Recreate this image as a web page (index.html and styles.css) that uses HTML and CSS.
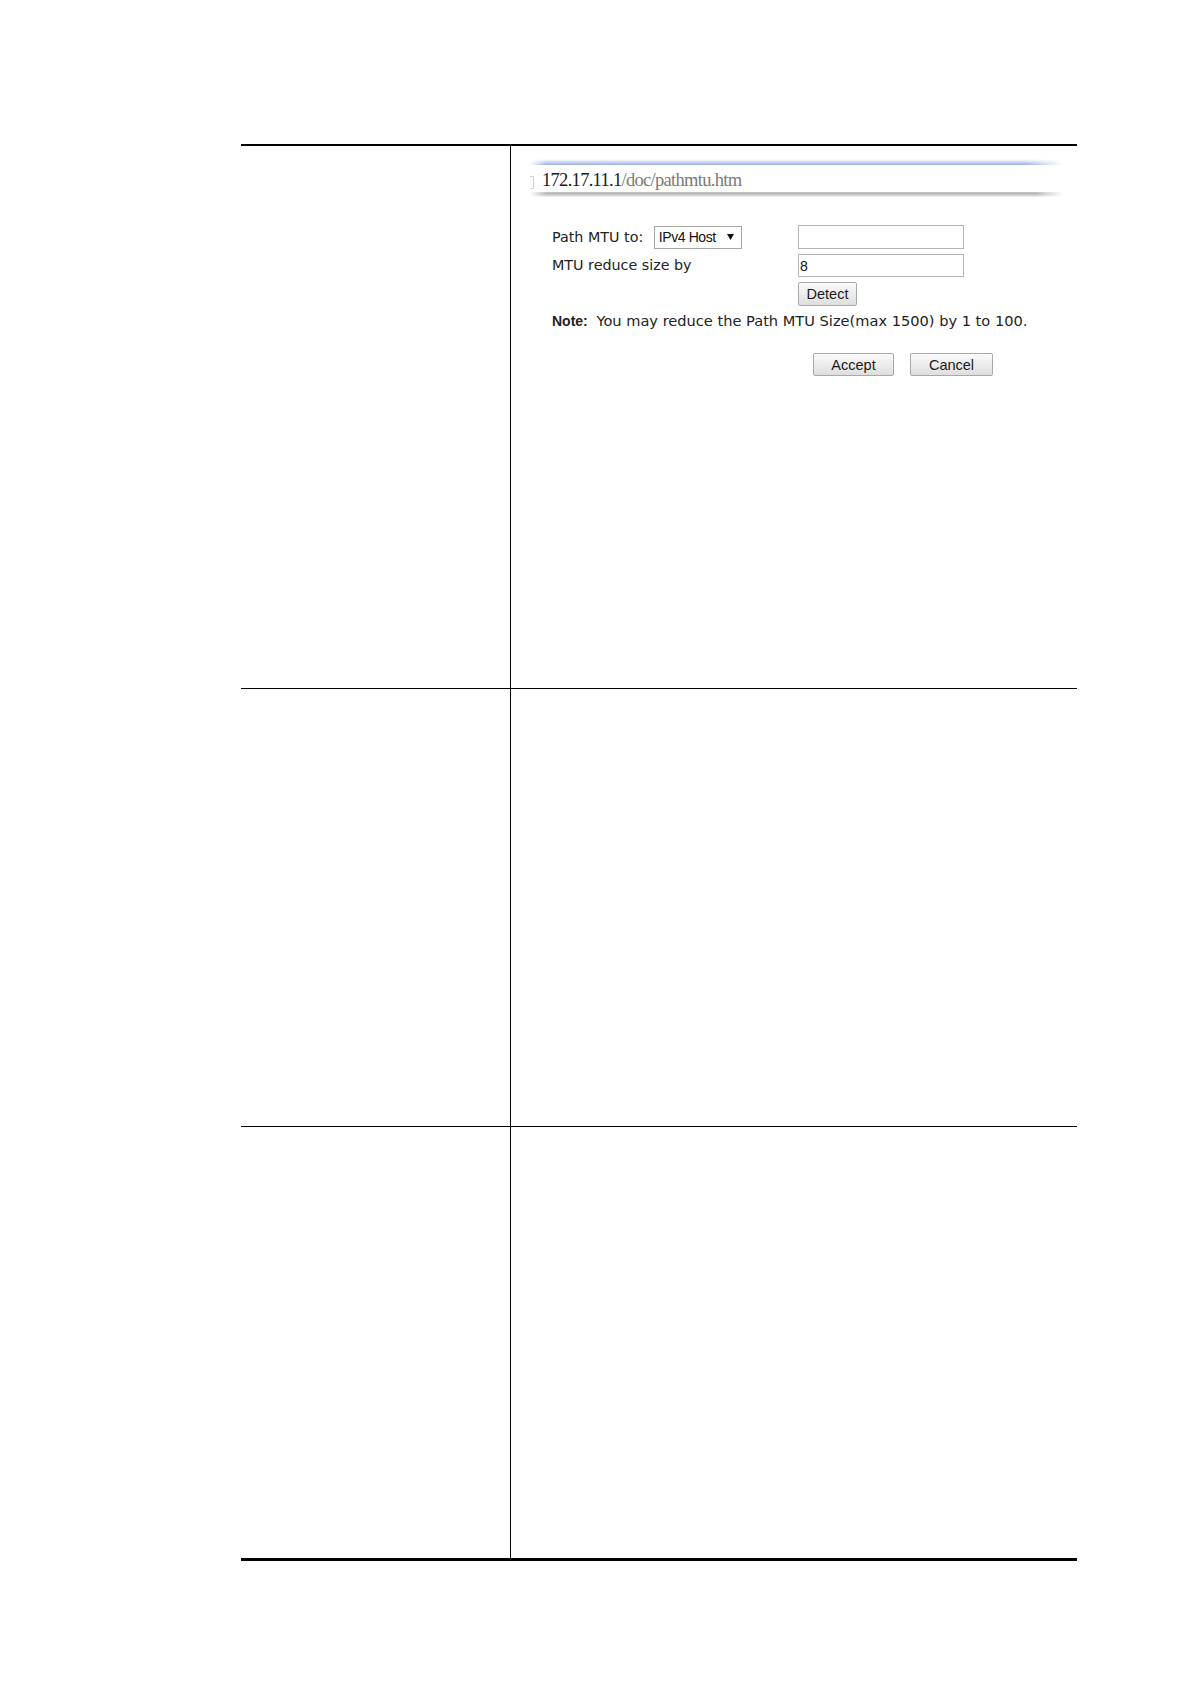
FILE: index.html
```html
<!DOCTYPE html>
<html>
<head>
<meta charset="utf-8">
<link rel="stylesheet" href="styles.css">
</head>
<body>
<div class="doc">
  <div class="row row1">
    <div class="lcell"></div>
    <div class="rcell">
      <div class="shot">
        <div class="addr">
          <div class="addr-top"></div>
          <div class="addr-text"><span class="pageicon"></span><span class="host">172.17.11.1</span><span class="path">/doc/pathmtu.htm</span></div>
          <div class="addr-bottom"></div>
        </div>
        <div class="form">
          <div class="fgrid">
            <div class="label">Path MTU to: <span class="select"><span class="seltext">IPv4 Host</span><svg class="selarrow" width="7" height="6" viewBox="0 0 7 6"><path d="M0 0H7L3.5 6Z" fill="#111"/></svg></span></div>
            <div class="field"><span class="input"></span></div>
            <div class="label">MTU reduce size by</div>
            <div class="field"><span class="input input2">8</span></div>
            <div></div>
            <div class="field"><span class="btn btn-detect">Detect</span></div>
          </div>
          <div class="note"><b class="note-key">Note:</b> You may reduce the Path MTU Size(max 1500) by 1 to 100.</div>
          <div class="actions"><span class="btn btn-wide">Accept</span><span class="btn btn-wide btn-cancel">Cancel</span></div>
        </div>
      </div>
    </div>
  </div>
  <div class="row row2">
    <div class="lcell"></div>
    <div class="rcell"></div>
  </div>
  <div class="row row3">
    <div class="lcell"></div>
    <div class="rcell"></div>
  </div>
</div>
</body>
</html>
```
FILE: styles.css
```css
html, body {
  margin: 0;
  padding: 0;
  background: #fff;
}
body {
  font-family: "DejaVu Sans", Verdana, sans-serif;
  color: #222;
}
.doc {
  margin: 144px 0 0 241px;
  width: 836px;
  border-top: 2px solid #000;
  border-bottom: 3px solid #000;
}
.row {
  display: flex;
}
.row2, .row3 {
  border-top: 1px solid #000;
}
.row1 { height: 542px; }
.row2 { height: 437px; }
.row3 { height: 431px; }
.lcell {
  width: 270px;
  box-sizing: border-box;
  border-right: 1px solid #000;
  flex: none;
}
.rcell {
  flex: 1;
}
.shot {
  padding: 13px 15px 0 19px;
}
.addr {
  width: 533px;
}
.addr-top {
  height: 6px;
  background: linear-gradient(#ffffff, #e6ebf8 30%, #bfcaea 65%, #9eaedc);
  -webkit-mask-image: linear-gradient(to right, transparent 0%, #000 3%, #000 93%, transparent 100%);
  mask-image: linear-gradient(to right, transparent 0%, #000 3%, #000 93%, transparent 100%);
}
.addr-text {
  height: 27px;
  display: flex;
  align-items: flex-end;
  font-family: "Liberation Serif", "Times New Roman", serif;
  font-size: 18.5px;
  line-height: 20px;
  padding-bottom: 2px;
  box-sizing: border-box;
  letter-spacing: -0.7px;
}
.pageicon {
  width: 3px;
  height: 11px;
  border: 1px solid #d4d4d4;
  border-left: none;
  margin-right: 8px;
  margin-bottom: 1px;
}
.host {
  color: #1a1a1a;
}
.path {
  color: #7a7a7a;
}
.addr-bottom {
  height: 5px;
  background: linear-gradient(#c9c9c9, #b6b6b6 35%, #d6d6d6 70%, #f6f6f6);
  -webkit-mask-image: linear-gradient(to right, transparent 0%, #000 3%, #000 95%, transparent 100%);
  mask-image: linear-gradient(to right, transparent 0%, #000 3%, #000 95%, transparent 100%);
}
.form {
  margin: 28px 0 0 22px;
  font-size: 14.3px;
}
.fgrid {
  display: grid;
  grid-template-columns: 246px 166px;
  grid-template-rows: 24px 23px 24px;
  row-gap: 5px;
  align-items: center;
}
.label {
  display: flex;
  align-items: center;
  white-space: pre;
  line-height: 17px;
}
.select {
  margin-left: 6px;
  width: 88px;
  height: 23px;
  box-sizing: border-box;
  border: 1px solid #a6a6a6;
  background: #fff;
  display: flex;
  align-items: center;
  padding: 0 4px 0 4px;
  font-family: "Liberation Sans", Arial, sans-serif;
  font-size: 14px;
  letter-spacing: -0.4px;
  color: #111;
}
.seltext {
  flex: 1;
}
.selarrow {
  margin-right: 3px;
}
.field {
  display: flex;
  align-items: center;
}
.input {
  display: flex;
  align-items: center;
  width: 166px;
  height: 24px;
  box-sizing: border-box;
  border: 1px solid #b4b4b4;
  background: #fff;
  font-family: "Liberation Sans", Arial, sans-serif;
  font-size: 14px;
  color: #111;
  padding-left: 1px;
}
.input2 {
  height: 23px;
}
.btn {
  display: inline-flex;
  align-items: center;
  justify-content: center;
  height: 24px;
  box-sizing: border-box;
  border: 1px solid #a9a9a9;
  border-radius: 2px;
  background: linear-gradient(#fbfbfb, #ececec 50%, #dedede);
  font-family: "Liberation Sans", Arial, sans-serif;
  font-size: 14.5px;
  color: #1a1a1a;
}
.btn-detect {
  width: 59px;
}
.note {
  margin-top: 6px;
  line-height: 17px;
  font-size: 14.6px;
  white-space: nowrap;
}
.note-key {
  font-family: "Liberation Sans", Arial, sans-serif;
  font-size: 14px;
  margin-right: 4px;
}
.actions {
  margin: 23px 0 0 261px;
  display: flex;
  gap: 16px;
}
.btn-wide {
  width: 81px;
  height: 23px;
}
.btn-cancel {
  width: 83px;
}
```
